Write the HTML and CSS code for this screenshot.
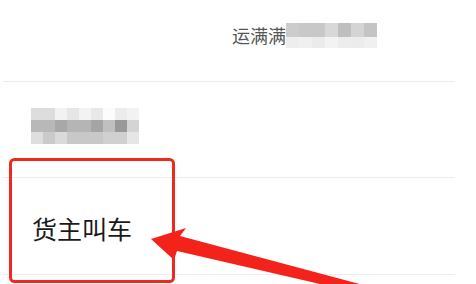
FILE: index.html
```html
<!DOCTYPE html>
<html lang="zh-CN">
<head>
    <meta charset="UTF-8">
    <meta name="viewport" content="width=device-width, initial-scale=1.0">
    <title>货主叫车</title>
    <link rel="stylesheet" href="styles.css">
</head>
<body>
    <div class="page">
        <div class="list">
            <div class="row row-name">
                <span class="name">运满满</span>
                <div class="mosaic mosaic-a">
                    <i></i><i></i><i></i><i></i><i></i><i></i><i></i>
                    <i></i><i></i><i></i><i></i><i></i><i></i><i></i>
                </div>
            </div>
            <div class="row row-blur">
                <div class="mosaic mosaic-b">
                    <i></i><i></i><i></i><i></i><i></i><i></i><i></i><i></i><i></i>
                    <i></i><i></i><i></i><i></i><i></i><i></i><i></i><i></i><i></i>
                    <i></i><i></i><i></i><i></i><i></i><i></i><i></i><i></i><i></i>
                </div>
            </div>
            <div class="row row-call">
                <span class="call">货主叫车</span>
            </div>
        </div>

        <!-- 标注：红框 + 箭头 -->
        <svg class="mark" width="476" height="284" viewBox="0 0 476 284">
            <rect x="10.5" y="159.5" width="163" height="122" rx="4" fill="none" stroke="#ee2a1e" stroke-width="3"/>
            <polygon fill="#f3221a" points="151,239 186,228 180,236 382,290 346,290 177,251 174,260"/>
        </svg>
    </div>
</body>
</html>
```

FILE: styles.css
```css
/* Reset básico */
* {
    margin: 0;
    padding: 0;
    box-sizing: border-box;
}

body {
    background-color: #ffffff;
    font-family: "Noto Sans CJK SC", "Noto Sans", sans-serif;
}

.page {
    position: relative;
    width: 476px;
    height: 284px;
    overflow: hidden;
}

.list {
    margin-left: 3px;
    width: 452px;
}

.row {
    display: flex;
    align-items: center;
    border-bottom: 1px solid #ececec;
}

.row-name {
    height: 82px;
    padding-left: 229px;
    padding-bottom: 11px;
}

.name {
    font-size: 18px;
    color: #555555;
    line-height: 1;
}

.row-blur {
    height: 96px;
    padding-left: 28px;
    padding-bottom: 7px;
}

.row-call {
    height: 97px;
    padding-left: 29px;
    padding-top: 4px;
}

.call {
    font-size: 25px;
    color: #1a1a1a;
    line-height: 1;
}

.mosaic {
    display: grid;
}

.mosaic i {
    display: block;
}

.mosaic-a {
    grid-template-columns: repeat(7, 13px);
    grid-template-rows: 14px 11px;
}

.mosaic-a i:nth-child(1) { background: #cccccc; }
.mosaic-a i:nth-child(2) { background: #c8c8c8; }
.mosaic-a i:nth-child(3) { background: #c8c8c8; }
.mosaic-a i:nth-child(4) { background: #d8d8d8; }
.mosaic-a i:nth-child(5) { background: #bfbfbf; }
.mosaic-a i:nth-child(6) { background: #d4d4d4; }
.mosaic-a i:nth-child(7) { background: #c4c4c4; }
.mosaic-a i:nth-child(8) { background: #eeeeee; }
.mosaic-a i:nth-child(9) { background: #f0f0f0; }
.mosaic-a i:nth-child(10) { background: #ebebeb; }
.mosaic-a i:nth-child(11) { background: #f3f3f3; }
.mosaic-a i:nth-child(12) { background: #ededed; }
.mosaic-a i:nth-child(13) { background: #ececec; }
.mosaic-a i:nth-child(14) { background: #f0f0f0; }

.mosaic-b {
    grid-template-columns: repeat(9, 12px);
    grid-template-rows: repeat(3, 12px);
}

.mosaic-b i:nth-child(1) { background: #dddddd; }
.mosaic-b i:nth-child(2) { background: #dddddd; }
.mosaic-b i:nth-child(3) { background: #f2f2f2; }
.mosaic-b i:nth-child(4) { background: #e6e6e6; }
.mosaic-b i:nth-child(5) { background: #f3f3f3; }
.mosaic-b i:nth-child(6) { background: #e8e8e8; }
.mosaic-b i:nth-child(7) { background: #fcfcfc; }
.mosaic-b i:nth-child(8) { background: #ececec; }
.mosaic-b i:nth-child(9) { background: #f2f2f2; }
.mosaic-b i:nth-child(10) { background: #b8b8b8; }
.mosaic-b i:nth-child(11) { background: #b8b8b8; }
.mosaic-b i:nth-child(12) { background: #a8a8a8; }
.mosaic-b i:nth-child(13) { background: #b5b5b5; }
.mosaic-b i:nth-child(14) { background: #b5b5b5; }
.mosaic-b i:nth-child(15) { background: #a5a5a5; }
.mosaic-b i:nth-child(16) { background: #c0c0c0; }
.mosaic-b i:nth-child(17) { background: #999999; }
.mosaic-b i:nth-child(18) { background: #d4d4d4; }
.mosaic-b i:nth-child(19) { background: #dedede; }
.mosaic-b i:nth-child(20) { background: #cacaca; }
.mosaic-b i:nth-child(21) { background: #dadada; }
.mosaic-b i:nth-child(22) { background: #c8c8c8; }
.mosaic-b i:nth-child(23) { background: #c8c8c8; }
.mosaic-b i:nth-child(24) { background: #c8c8c8; }
.mosaic-b i:nth-child(25) { background: #d0d0d0; }
.mosaic-b i:nth-child(26) { background: #d0d0d0; }
.mosaic-b i:nth-child(27) { background: #e6e6e6; }

/* camada de anotação por cima da lista */
.mark {
    position: absolute;
    left: 0;
    top: 0;
}
```
